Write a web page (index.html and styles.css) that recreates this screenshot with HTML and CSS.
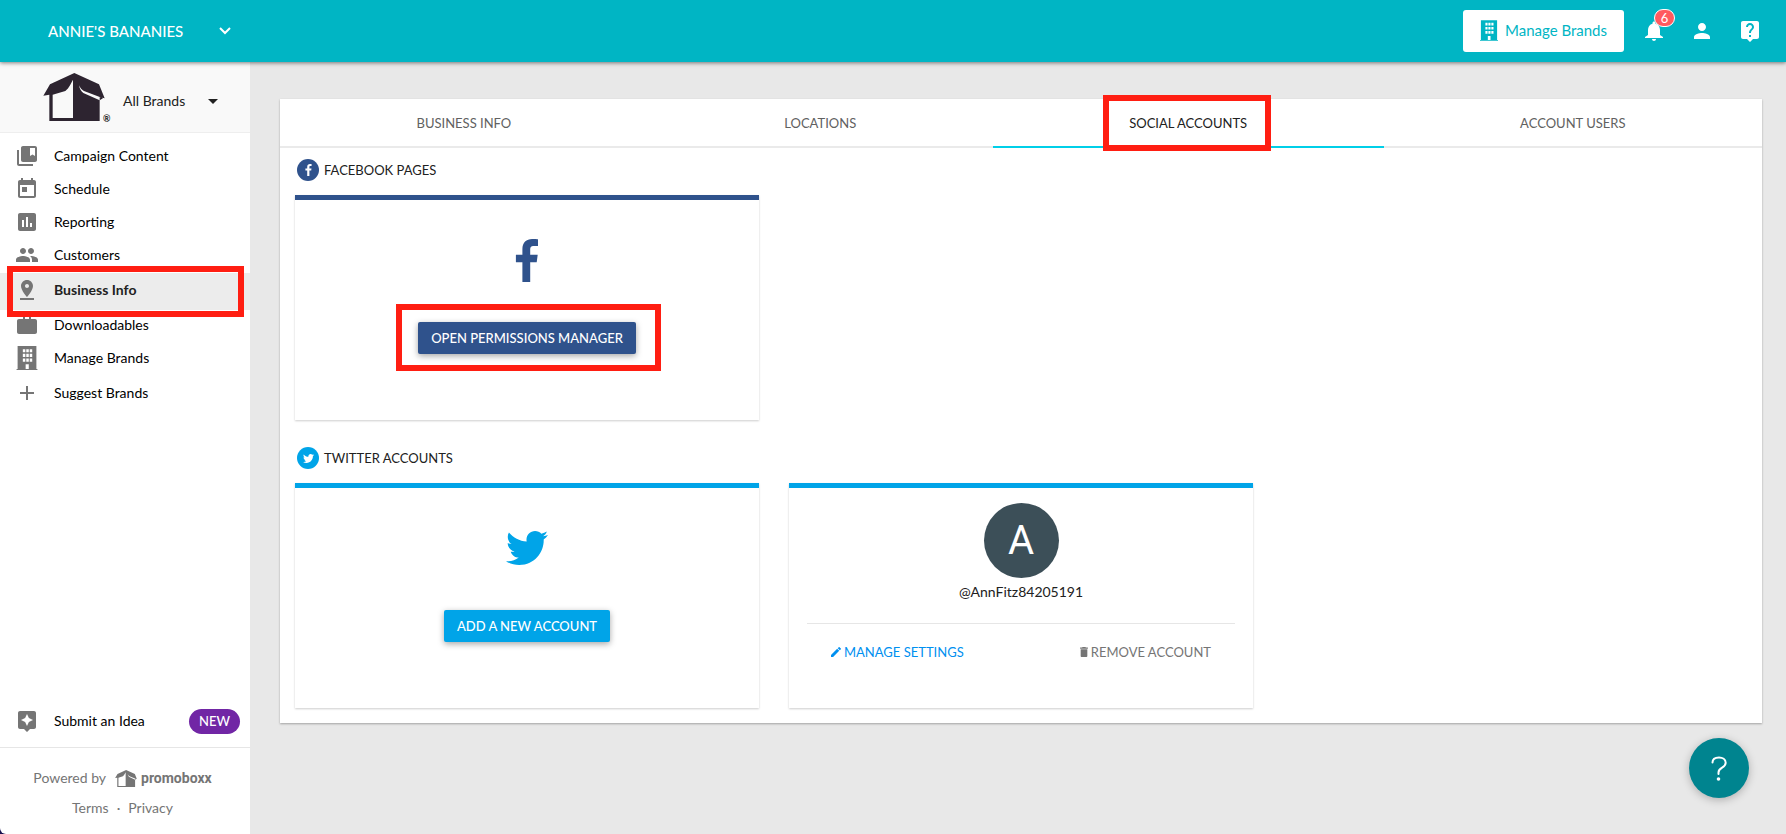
FILE: index.html
```html
<!DOCTYPE html>
<html lang="en">
<head>
    <meta charset="UTF-8">
    <meta name="viewport" content="width=device-width, initial-scale=1.0">
    <title>Business Info - Social Accounts</title>
    <link rel="stylesheet" href="styles.css">
</head>
<body>
    <!-- Shared shapes -->
    <svg class="sprite" aria-hidden="true">
        <symbol id="building" viewBox="0 0 20 23">
            <path fill-rule="evenodd" d="M1 0h18v22h1v1H0v-1h1zM6 3v3h2.400V3zM9.300 3v3h2.400V3zM12.600 3v3H15V3zM6 7.500v3h2.400v-3zM9.300 7.500v3h2.400v-3zM12.600 7.500v3H15v-3zM6 12v3h2.400v-3zM9.300 12v3h2.400v-3zM12.600 12v3H15v-3zM8.700 17.500V22h3v-4.500z"/>
        </symbol>
        <symbol id="facebook" viewBox="0 0 24 43">
            <path d="M23 .3v6.800h-4c-3.200 0-3.800 1.500-3.800 3.700v4.900h7.500l-1 7.600h-6.500V43H7.400V23.300H.9v-7.600h6.500v-5.600C7.400 3.600 11.400 0 17.100 0c2.800 0 5.100.2 5.900.3z"/>
        </symbol>
        <symbol id="twitter" viewBox="0 0 512 512">
            <path d="M459.370 151.716c.325 4.548.325 9.097.325 13.645 0 138.720-105.583 298.558-298.558 298.558-59.452 0-114.680-17.219-161.137-47.106 8.447.974 16.568 1.299 25.340 1.299 49.055 0 94.213-16.568 130.274-44.832-46.132-.975-84.792-31.188-98.112-72.772 6.498.974 12.995 1.624 19.818 1.624 9.421 0 18.843-1.300 27.614-3.573-48.081-9.747-84.143-51.980-84.143-102.985v-1.299c13.969 7.797 30.214 12.670 47.431 13.319-28.264-18.843-46.781-51.005-46.781-87.391 0-19.492 5.197-37.360 14.294-52.954 51.655 63.675 129.300 105.258 216.365 109.807-1.624-7.797-2.599-15.918-2.599-24.040 0-57.828 46.782-104.934 104.934-104.934 30.213 0 57.502 12.670 76.670 33.137 23.715-4.548 46.456-13.320 66.599-25.340-7.798 24.366-24.366 44.833-46.132 57.827 21.117-2.273 41.584-8.122 60.426-16.243-14.292 20.791-32.161 39.308-52.628 54.253z"/>
        </symbol>
        <symbol id="box" viewBox="130 222 184 144">
            <path fill-rule="evenodd" d="M223 222l74 34 17 42-15-3v71H148v-79l-18 3 20-34zM158 287v70h61V242c-6 10-11 24-23 34zM237 259c2 11 6 18 13 23l49 22 10-6-57-22c-6-3-12-9-15-17z"/>
        </symbol>
    </svg>

    <header class="topbar">
        <button class="account-menu">
            ANNIE'S BANANIES
            <svg class="icon" viewBox="0 0 24 24"><path fill="none" stroke="currentColor" stroke-width="2" d="M7 9l5 5 5-5"/></svg>
        </button>
        <div class="topbar-right">
            <button class="brands-button">
                <svg class="building-small"><use href="#building"/></svg>
                Manage Brands
            </button>
            <button class="icon-button" aria-label="Notifications">
                <svg class="icon" viewBox="0 0 24 24"><path d="M12 22c1.100 0 2-.9 2-2h-4c0 1.100.9 2 2 2zm6-6v-5c0-3.070-1.630-5.640-4.500-6.320V4c0-.83-.67-1.500-1.500-1.500s-1.500.67-1.500 1.500v.68C7.640 5.360 6 7.920 6 11v5l-3 2v1h18v-1z"/></svg>
                <span class="count">6</span>
            </button>
            <button class="icon-button" aria-label="Profile">
                <svg class="icon" viewBox="0 0 24 24"><path d="M12 12c2.210 0 4-1.790 4-4s-1.790-4-4-4-4 1.790-4 4 1.790 4 4 4zm0 2c-2.670 0-8 1.340-8 4v2h16v-2c0-2.660-5.330-4-8-4z"/></svg>
            </button>
            <button class="icon-button" aria-label="Help">
                <svg class="icon" viewBox="0 0 24 24"><path d="M19 2H5c-1.100 0-2 .9-2 2v14c0 1.100.9 2 2 2h4l3 3 3-3h4c1.100 0 2-.9 2-2V4c0-1.100-.9-2-2-2zm-6 16h-2v-2h2v2zm2.070-7.750l-.9.920C13.450 11.900 13 12.500 13 14h-2v-.5c0-1.100.45-2.100 1.170-2.830l1.240-1.260c.37-.36.59-.86.59-1.410 0-1.100-.9-2-2-2s-2 .9-2 2H8c0-2.210 1.790-4 4-4s4 1.790 4 4c0 .88-.36 1.680-.93 2.250z"/></svg>
            </button>
        </div>
    </header>

    <div class="page">
        <aside class="sidebar">
            <button class="brand-select">
                <svg class="brand-logo"><use href="#box"/></svg>
                <span class="registered">®</span>
                <span class="brand-label">
                    All Brands
                    <svg class="icon" viewBox="0 0 24 24"><path d="M7 10l5 5 5-5z"/></svg>
                </span>
            </button>

            <nav class="side-nav">
                <a href="#">
                    <svg class="icon" viewBox="0 0 24 24"><path d="M4 6H2v14c0 1.100.9 2 2 2h14v-2H4V6zm16-4H8c-1.100 0-2 .9-2 2v12c0 1.100.9 2 2 2h12c1.100 0 2-.9 2-2V4c0-1.100-.9-2-2-2zm0 10l-2.500-1.500L15 12V4h5v8z"/></svg>
                    Campaign Content
                </a>
                <a href="#">
                    <svg class="icon" viewBox="0 0 24 24"><path d="M19 3h-1V1h-2v2H8V1H6v2H5c-1.110 0-1.990.9-1.990 2L3 19c0 1.100.89 2 2 2h14c1.100 0 2-.9 2-2V5c0-1.100-.9-2-2-2zm0 16H5V8h14v11zM7 10h5v5H7z"/></svg>
                    Schedule
                </a>
                <a href="#">
                    <svg class="icon" viewBox="0 0 24 24"><path d="M19 3H5c-1.100 0-2 .9-2 2v14c0 1.100.9 2 2 2h14c1.100 0 2-.9 2-2V5c0-1.100-.9-2-2-2zM9 17H7v-7h2v7zm4 0h-2V7h2v10zm4 0h-2v-4h2v4z"/></svg>
                    Reporting
                </a>
                <a href="#">
                    <svg class="icon" viewBox="0 0 24 24"><path d="M16 11c1.660 0 2.990-1.340 2.990-3S17.660 5 16 5c-1.660 0-3 1.340-3 3s1.340 3 3 3zm-8 0c1.660 0 2.990-1.340 2.990-3S9.660 5 8 5C6.340 5 5 6.340 5 8s1.340 3 3 3zm0 2c-2.330 0-7 1.170-7 3.500V19h14v-2.500c0-2.330-4.670-3.500-7-3.500zm8 0c-.29 0-.62.020-.97.050 1.160.84 1.970 1.970 1.970 3.450V19h6v-2.500c0-2.330-4.670-3.500-7-3.500z"/></svg>
                    Customers
                </a>
                <a href="#" class="tall active">
                    <svg class="icon" viewBox="0 0 24 24"><path d="M18 8c0-3.310-2.690-6-6-6S6 4.690 6 8c0 4.500 6 11 6 11s6-6.500 6-11zm-8 0c0-1.100.9-2 2-2s2 .9 2 2-.89 2-2 2c-1.100 0-2-.9-2-2zM5 20v2h14v-2H5z"/></svg>
                    Business Info
                    <span class="marker nav-marker"></span>
                </a>
                <a href="#">
                    <svg class="icon" viewBox="0 0 24 24"><path d="M20 6h-4V4l-2-2h-4L8 4v2H4c-1.100 0-2 .9-2 2v11c0 1.100.9 2 2 2h16c1.100 0 2-.9 2-2V8c0-1.100-.9-2-2-2zm-6 0h-4V4h4v2z"/></svg>
                    Downloadables
                </a>
                <a href="#">
                    <svg class="icon"><use href="#building"/></svg>
                    Manage Brands
                </a>
                <a href="#" class="tall">
                    <svg class="icon" viewBox="0 0 24 24"><path d="M19 13h-6v6h-2v-6H5v-2h6V5h2v6h6z"/></svg>
                    Suggest Brands
                </a>
            </nav>

            <nav class="side-nav idea">
                <a href="#" class="tall">
                    <svg class="icon" viewBox="0 0 24 24"><path d="M19 2H5c-1.100 0-2 .9-2 2v14c0 1.100.9 2 2 2h4l3 3 3-3h4c1.100 0 2-.9 2-2V4c0-1.100-.9-2-2-2zm-5.120 10.880L12 17l-1.880-4.120L6 11l4.120-1.880L12 5l1.880 4.120L18 11l-4.120 1.880z"/></svg>
                    Submit an Idea
                    <span class="new">NEW</span>
                </a>
            </nav>

            <footer class="side-footer">
                <div class="powered">
                    Powered by
                    <svg class="promo-logo"><use href="#box"/></svg>
                    <span class="promo-name">promoboxx</span>
                </div>
                <div class="legal">
                    <a href="#">Terms</a>
                    <span>·</span>
                    <a href="#">Privacy</a>
                </div>
            </footer>
        </aside>

        <main class="content">
            <div class="panel">
                <nav class="tabs">
                    <a href="#">BUSINESS INFO</a>
                    <a href="#">LOCATIONS</a>
                    <a href="#" class="selected">
                        <span class="marked">SOCIAL ACCOUNTS<span class="marker tab-marker"></span></span>
                    </a>
                    <a href="#">ACCOUNT USERS</a>
                </nav>

                <section class="network facebook">
                    <h2>
                        <span class="round"><svg class="facebook-mini"><use href="#facebook"/></svg></span>
                        FACEBOOK PAGES
                    </h2>
                    <div class="cards">
                        <div class="card">
                            <svg class="network-icon facebook-icon"><use href="#facebook"/></svg>
                            <div class="marked">
                                <button class="action">OPEN PERMISSIONS MANAGER</button>
                                <span class="marker button-marker"></span>
                            </div>
                        </div>
                    </div>
                </section>

                <section class="network twitter">
                    <h2>
                        <span class="round"><svg class="twitter-mini"><use href="#twitter"/></svg></span>
                        TWITTER ACCOUNTS
                    </h2>
                    <div class="cards">
                        <div class="card">
                            <svg class="network-icon twitter-icon"><use href="#twitter"/></svg>
                            <button class="action">ADD A NEW ACCOUNT</button>
                        </div>
                        <div class="card profile">
                            <div class="avatar">A</div>
                            <p class="handle">@AnnFitz84205191</p>
                            <div class="profile-actions">
                                <button class="manage">
                                    <svg viewBox="3 3 18 18"><path d="M3 17.250V21h3.750L17.810 9.940l-3.750-3.750L3 17.250zM20.710 7.040c.39-.39.39-1.020 0-1.410l-2.340-2.340c-.39-.39-1.020-.39-1.410 0l-1.830 1.830 3.750 3.750 1.830-1.830z"/></svg>
                                    MANAGE SETTINGS
                                </button>
                                <button class="remove">
                                    <svg class="trash" viewBox="5 3 14 18"><path d="M6 19c0 1.100.9 2 2 2h8c1.100 0 2-.9 2-2V7H6v12zM19 4h-3.500l-1-1h-5l-1 1H5v2h14V4z"/></svg>
                                    REMOVE ACCOUNT
                                </button>
                            </div>
                        </div>
                    </div>
                </section>
            </div>
        </main>
    </div>

    <button class="help-bubble" aria-label="Open help">
        <svg viewBox="0 0 60 60"><path fill="none" stroke="#fff" stroke-width="2" stroke-linecap="round" d="M23.500 24.500c0-3.500 3-5 6.500-5s6.700 1.800 6.700 5.300c0 5.500-7.200 4.200-7.200 9.700v1.500"/><circle cx="29.500" cy="41" r="1.800" fill="#fff"/></svg>
    </button>
</body>
</html>
```

FILE: styles.css
```css
* {
    box-sizing: border-box;
}
html {
    background-color: #17104f;
}
body {
    margin: 0;
    min-height: 100vh;
    display: flex;
    flex-direction: column;
    font-family: Lato, 'Liberation Sans', sans-serif;
    font-size: 14px;
    line-height: 20px;
    color: #212121;
}
button {
    font: inherit;
    color: inherit;
    background: none;
    border: none;
    padding: 0;
    cursor: pointer;
}
a {
    color: inherit;
    text-decoration: none;
}
svg {
    display: block;
    flex: none;
    fill: currentColor;
}
.sprite {
    display: none;
}
.icon {
    width: 24px;
    height: 24px;
}

/* Top bar */
.topbar {
    position: relative;
    z-index: 2;
    display: flex;
    align-items: center;
    justify-content: space-between;
    height: 62px;
    padding: 0 24px 0 48px;
    background-color: #00b5c4;
    color: white;
    box-shadow: 0 1px 4px rgba(0, 0, 0, 0.5);
}
.account-menu {
    display: flex;
    align-items: center;
    justify-content: space-between;
    width: 189px;
    font-size: 15px;
    font-weight: 500;
}
.topbar-right {
    display: flex;
    align-items: center;
    gap: 24px;
}
.brands-button {
    display: flex;
    align-items: center;
    gap: 7px;
    height: 42px;
    padding: 0 17px 2px;
    margin-right: -6px;
    background-color: white;
    color: #00b5c4;
    border-radius: 3px;
    font-size: 15px;
}
.building-small {
    width: 18px;
    height: 21px;
}
.icon-button {
    position: relative;
}
.count {
    position: absolute;
    top: -10px;
    left: 12px;
    width: 21px;
    height: 18px;
    border: 1px solid white;
    border-radius: 9px;
    background-color: #ff5a5f;
    font-size: 13px;
    line-height: 16px;
}

/* Sidebar */
.page {
    flex: 1;
    display: flex;
    background: linear-gradient(90deg, transparent 8px, #e8e8e8 8px);
}
.sidebar {
    display: flex;
    flex-direction: column;
    width: 250px;
    background-color: white;
    border-bottom-left-radius: 6px;
}
.brand-select {
    display: flex;
    align-items: center;
    height: 71px;
    padding-left: 43px;
    background-color: #f9f9f9;
    border-bottom: 1px solid #eeeeee;
}
.brand-logo {
    width: 62px;
    height: 48px;
    color: #2d2430;
}
.registered {
    align-self: flex-end;
    width: 18px;
    margin-left: -2px;
    padding-bottom: 3px;
    font-size: 9px;
    font-weight: bold;
    text-align: left;
}
.brand-label {
    display: flex;
    align-items: center;
    justify-content: space-between;
    width: 104px;
    padding: 7px 0 0 2px;
}
.side-nav {
    padding-top: 8px;
    color: black;
}
.side-nav a {
    position: relative;
    display: flex;
    align-items: center;
    gap: 15px;
    height: 33px;
    padding: 0 10px 3px 15px;
}
.side-nav .tall {
    height: 37px;
}
.side-nav .active {
    z-index: 1;
    background-color: #ececec;
    color: #212121;
    font-weight: bold;
}
.side-nav .icon {
    color: #757575;
}
.idea {
    margin-top: auto;
    padding: 0 0 6px;
}
.new {
    margin-left: auto;
    padding: 0 10px;
    border-radius: 13px;
    background-color: #7126a5;
    color: white;
    font-size: 13px;
    font-weight: 500;
    line-height: 25px;
}
.side-footer {
    height: 87px;
    padding-top: 20px;
    border-top: 1px solid #e6e6e6;
    color: #757575;
}
.powered {
    display: flex;
    align-items: center;
    justify-content: center;
    padding-right: 5px;
}
.promo-logo {
    width: 22px;
    height: 17px;
    margin: 0 4px 0 9px;
}
.promo-name {
    font-family: Roboto, sans-serif;
    font-weight: bold;
}
.legal {
    display: flex;
    justify-content: center;
    gap: 8px;
    padding: 10px 5px 0 0;
}

/* Content */
.content {
    flex: 1;
    padding: 37px 24px 37px 30px;
    background-color: #e8e8e8;
}
.panel {
    background-color: white;
    padding-bottom: 15px;
    box-shadow: 0 1px 2px rgba(0, 0, 0, 0.3);
}
.tabs {
    display: flex;
    border-bottom: 2px solid #eaeaea;
}
.tabs a {
    flex: 1 1 auto;
    height: 49px;
    margin-bottom: -2px;
    padding: 14px 0 13px;
    border-bottom: 2px solid transparent;
    color: #616161;
    text-align: center;
    font-size: 13px;
}
.tabs .selected {
    border-color: #00cfe8;
    color: #212121;
}
.network {
    padding: 0 15px;
}
.twitter {
    margin-top: 16px;
    color: #00a4e8;
}
.facebook {
    color: #2f528c;
}
.network h2 {
    display: flex;
    align-items: center;
    gap: 5px;
    margin: 0;
    padding: 11px 2px 14px;
    color: #212121;
    font-size: 13px;
    font-weight: normal;
}
.round {
    display: flex;
    align-items: center;
    justify-content: center;
    width: 22px;
    height: 22px;
    border-radius: 50%;
}
.facebook .round,
.facebook .action {
    background-color: #2f528c;
}
.twitter .round,
.twitter .action {
    background-color: #00a4e8;
}
.round svg {
    color: white;
}
.facebook-mini {
    width: 7px;
    height: 12px;
}
.twitter-mini {
    width: 11px;
    height: 11px;
}
.cards {
    display: grid;
    grid-template-columns: repeat(3, 1fr);
    gap: 30px;
}
.card {
    display: flex;
    flex-direction: column;
    align-items: center;
    height: 225px;
    padding-top: 35px;
    border-top: 5px solid currentColor;
    box-shadow: 0 1px 2px rgba(0, 0, 0, 0.2);
}
.network-icon {
    height: 50px;
    margin-bottom: 37px;
}
.facebook-icon {
    width: 24px;
    padding: 4px 0 3px;
}
.twitter-icon {
    width: 42px;
}
.action {
    display: block;
    padding: 6px 13px;
    border-radius: 2px;
    color: white;
    font-size: 13px;
    font-weight: 500;
    box-shadow: 0 2px 6px rgba(0, 0, 0, 0.35);
}
.profile {
    padding: 15px 18px 0;
}
.avatar {
    width: 75px;
    height: 75px;
    border-radius: 50%;
    background-color: #3c4f58;
    color: white;
    font-family: Roboto, sans-serif;
    font-size: 40px;
    line-height: 75px;
    text-align: center;
}
.handle {
    margin: 4px 0 21px;
    color: #212121;
}
.profile-actions {
    display: flex;
    justify-content: space-between;
    width: 100%;
    padding: 18px 24px;
    border-top: 1px solid #e6e6e6;
    font-size: 13px;
}
.profile-actions button {
    display: flex;
    align-items: center;
    gap: 3px;
}
.profile-actions svg {
    width: 10px;
    height: 10px;
}
.profile-actions .trash {
    width: 8px;
}
.manage {
    color: #0090f0;
}
.remove {
    color: #757575;
}

/* Red outlines round the steps to follow */
.marked {
    position: relative;
}
.marker {
    position: absolute;
    border: 6px solid #ff1e12;
    pointer-events: none;
}
.nav-marker {
    inset: -7px 6px -7px 7px;
}
.tab-marker {
    inset: -20px -24px -20px -26px;
}
.button-marker {
    inset: -18px -25px -17px -22px;
}

.help-bubble {
    position: fixed;
    right: 37px;
    bottom: 36px;
    width: 60px;
    height: 60px;
    border-radius: 50%;
    background-color: #00848f;
    box-shadow: 0 2px 8px rgba(0, 0, 0, 0.25);
}
```
